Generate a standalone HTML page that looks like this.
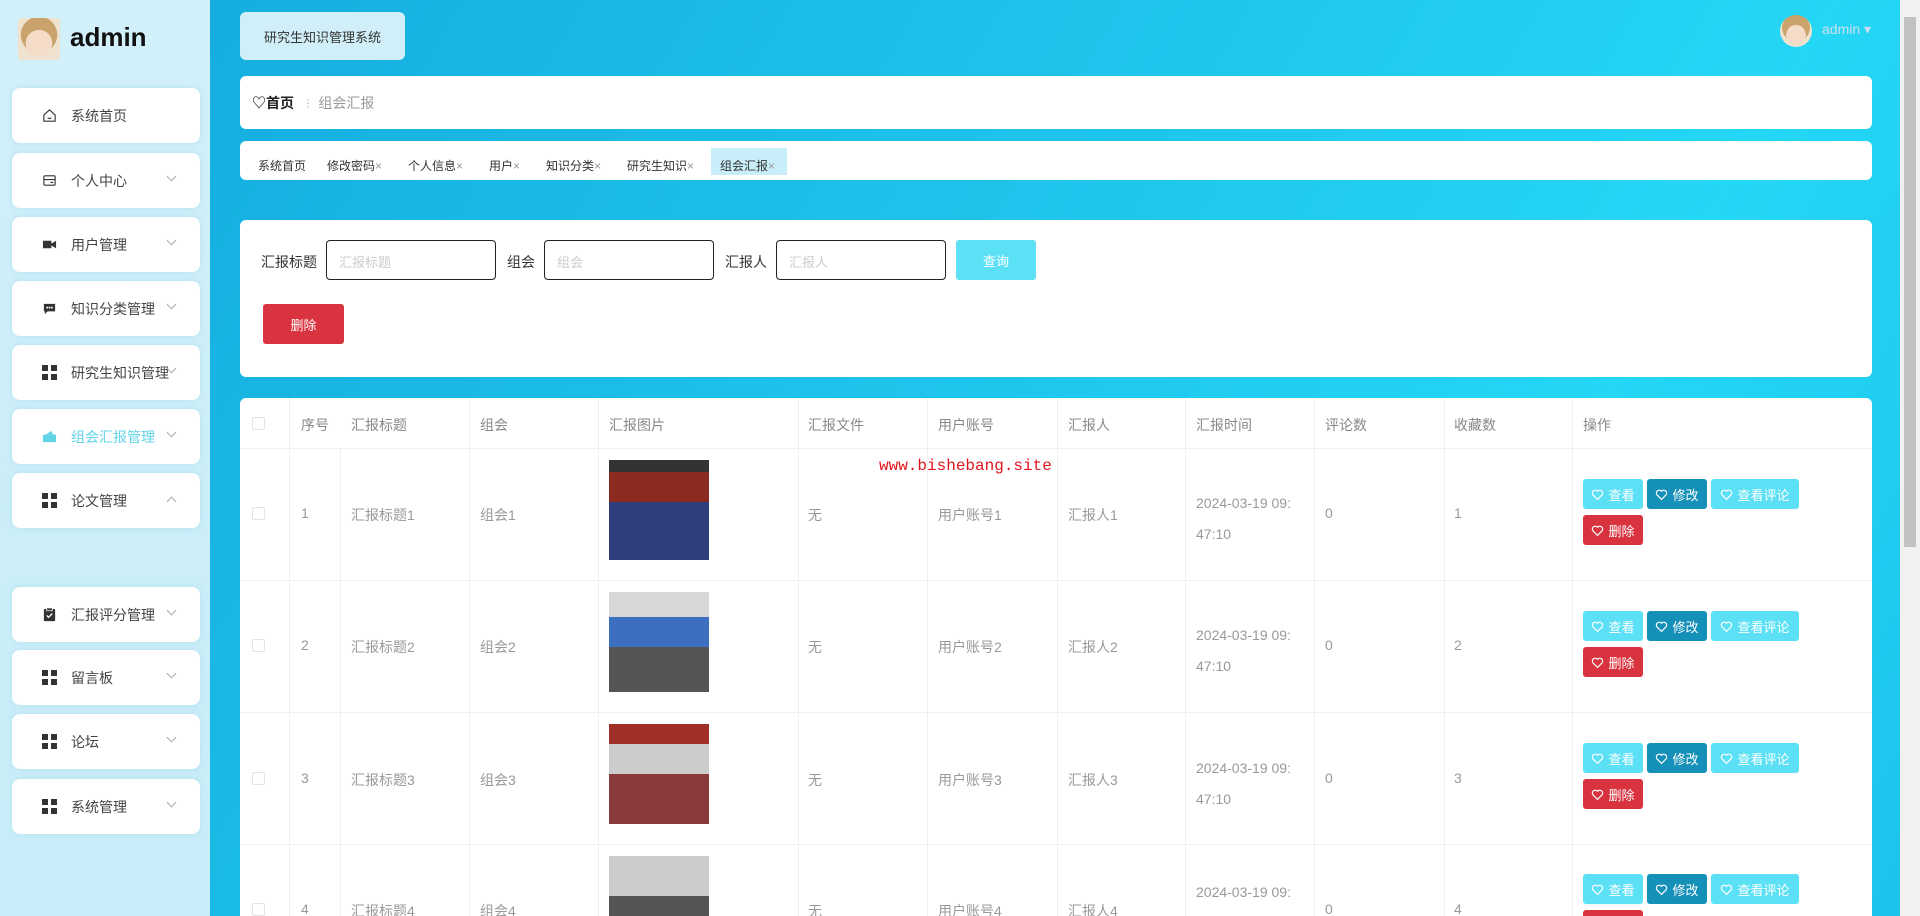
<!DOCTYPE html>
<html style="overflow:hidden;height:916px"><head><meta charset="utf-8"><style>
*{margin:0;padding:0;box-sizing:border-box}
body{width:1920px;height:916px;overflow:hidden;font-family:"Liberation Sans","Noto Sans CJK SC",sans-serif;font-size:14px;color:#333}
#wrap{position:relative;width:1920px;height:916px;overflow:hidden;background:linear-gradient(120deg,#13a9dc 0%,#1fc6ec 50%,#24d7f5 75%,#1cc3ec 100%)}
.abs{position:absolute}
.side{left:0;top:0;width:210px;height:916px;background:linear-gradient(180deg,#d2f0fa,#c8edf8)}
.mi{position:absolute;left:12px;width:188px;height:55px;background:#fff;border-radius:8px;box-shadow:0 0 6px rgba(170,220,240,.7);display:flex;align-items:center;padding-left:30px;font-size:14px;color:#444}
.mi .ic{width:15px;height:15px;margin-right:14px;display:inline-block}
.mi .ch{position:absolute;left:156px;top:20px;width:7px;height:7px;border-right:1px solid #aaa;border-bottom:1px solid #aaa;transform:rotate(45deg)}
.mi .ch.up{transform:rotate(-135deg);top:25px}
.grid{background:
linear-gradient(#333,#333) 0 0/6px 6px no-repeat,linear-gradient(#333,#333) 9px 0/6px 6px no-repeat,linear-gradient(#333,#333) 0 9px/6px 6px no-repeat,linear-gradient(#333,#333) 9px 9px/6px 6px no-repeat}
.card{background:#fff;border-radius:6px;position:absolute}
.tag{position:absolute;top:157px;font-size:12px;color:#333}
.tag i{font-style:normal;color:#999}
.lbl{position:absolute;top:252px;font-size:14px;color:#333}
.inp{position:absolute;top:240px;height:40px;width:170px;border:1px solid #222;border-radius:4px;font-size:13px;color:#ccc;padding:11px 12px}
.th{position:absolute;top:415px;color:#888;font-size:14px}
.vl{position:absolute;width:1px;background:#f0f0f0}
.hl{position:absolute;left:240px;width:1632px;height:1px;background:#f0f0f0}
.cell{position:absolute;color:#999;font-size:14px}
.btn{position:absolute;height:30px;border-radius:3px;color:#fff;font-size:13px;display:flex;align-items:center;justify-content:center;gap:4px}
.btn svg{width:13px;height:13px}
.b1{background:#5ce0f5;width:60px}.b2{background:#1590b8;width:60px}.b3{background:#5ce0f5;width:88px}.b4{background:#d9333f;width:60px}
.img{position:absolute;left:609px;width:100px;height:100px}
.cb{position:absolute;left:252px;width:13px;height:13px;border:1px solid #e3e3e3;border-radius:2px}
</style></head><body><div id="wrap">
<div class="abs side"></div>
<div class="abs" style="left:18px;top:18px;width:42px;height:42px;border-radius:4px;background:radial-gradient(circle at 50% 60%,#f4dcc8 0 40%,transparent 41%),radial-gradient(circle at 50% 40%,#c9a36b 0 55%,#efe3d0 56%)"></div>
<div class="abs" style="left:70px;top:22px;font-size:26px;font-weight:bold;color:#111">admin</div>

<div class="mi" style="top:88px"><svg class="ic" viewBox="0 0 16 16" fill="none" stroke="#333" stroke-width="1.2"><path d="M2 7.5L8 2l6 5.5V14H2z"/><path d="M6 10.5q2 1.5 4 0"/></svg>系统首页</div>
<div class="mi" style="top:153px"><svg class="ic" viewBox="0 0 16 16" fill="none" stroke="#333" stroke-width="1.2"><rect x="2" y="3" width="12" height="10" rx="1"/><path d="M2 7h12M9 10h3"/></svg>个人中心<span class="ch"></span></div>
<div class="mi" style="top:217px"><svg class="ic" viewBox="0 0 16 16"><path d="M1 4h9v8H1zM10 7l5-3v8l-5-3z" fill="#333"/></svg>用户管理<span class="ch"></span></div>
<div class="mi" style="top:281px"><svg class="ic" viewBox="0 0 16 16"><path d="M2 3h12v8H6l-3 3v-3H2z" fill="#333"/><circle cx="5.5" cy="7" r="1" fill="#fff"/><circle cx="8" cy="7" r="1" fill="#fff"/><circle cx="10.5" cy="7" r="1" fill="#fff"/></svg>知识分类管理<span class="ch"></span></div>
<div class="mi" style="top:345px"><span class="ic grid"></span>研究生知识管理<span class="ch"></span></div>
<div class="mi" style="top:409px;color:#63d3e8"><svg class="ic" viewBox="0 0 16 16"><path d="M1 6h14v8H1z" fill="#63d3e8"/><path d="M4 6l6-4 2 4" fill="#63d3e8"/></svg>组会汇报管理<span class="ch"></span></div>
<div class="mi" style="top:473px"><span class="ic grid"></span>论文管理<span class="ch up"></span></div>
<div class="mi" style="top:587px"><svg class="ic" viewBox="0 0 16 16"><rect x="2" y="2" width="12" height="13" rx="1" fill="#333"/><rect x="5" y="1" width="6" height="3" fill="#333" stroke="#fff" stroke-width=".8"/><path d="M5 9l2 2 4-4" stroke="#fff" stroke-width="1.5" fill="none"/></svg>汇报评分管理<span class="ch"></span></div>
<div class="mi" style="top:650px"><span class="ic grid"></span>留言板<span class="ch"></span></div>
<div class="mi" style="top:714px"><span class="ic grid"></span>论坛<span class="ch"></span></div>
<div class="mi" style="top:779px"><span class="ic grid"></span>系统管理<span class="ch"></span></div>

<div class="abs" style="left:240px;top:12px;width:165px;height:48px;background:#d0eff9;border-radius:6px;font-size:13px;color:#333;display:flex;align-items:center;justify-content:center">研究生知识管理系统</div>
<div class="abs" style="left:1780px;top:15px;width:32px;height:32px;border-radius:50%;background:radial-gradient(circle at 50% 62%,#f4dcc8 0 38%,transparent 39%),radial-gradient(circle at 50% 40%,#c9a36b 0 55%,#efe3d0 56%)"></div>
<div class="abs" style="left:1822px;top:21px;color:#cde;font-size:14px">admin ▾</div>

<div class="card" style="left:240px;top:76px;width:1632px;height:53px"></div>
<div class="abs" style="left:252px;top:93px;font-size:14px;font-weight:bold;color:#222">♡首页 <span style="color:#ccc;font-weight:normal;margin:0 8px">⁝</span><span style="color:#999;font-weight:normal">组会汇报</span></div>

<div class="card" style="left:240px;top:141px;width:1632px;height:39px"></div>
<div class="abs" style="left:711px;top:148px;width:76px;height:27px;background:#c8eef9"></div>
<div class="tag" style="left:258px">系统首页</div>
<div class="tag" style="left:327px">修改密码<i>×</i></div>
<div class="tag" style="left:408px">个人信息<i>×</i></div>
<div class="tag" style="left:489px">用户<i>×</i></div>
<div class="tag" style="left:546px">知识分类<i>×</i></div>
<div class="tag" style="left:627px">研究生知识<i>×</i></div>
<div class="tag" style="left:720px">组会汇报<i>×</i></div>

<div class="card" style="left:240px;top:220px;width:1632px;height:157px"></div>
<div class="lbl" style="left:261px">汇报标题</div><div class="inp" style="left:326px">汇报标题</div>
<div class="lbl" style="left:507px">组会</div><div class="inp" style="left:544px">组会</div>
<div class="lbl" style="left:725px">汇报人</div><div class="inp" style="left:776px">汇报人</div>
<div class="btn" style="left:956px;top:240px;width:80px;height:40px;background:#5ce0f5">查询</div>
<div class="btn" style="left:263px;top:304px;width:81px;height:40px;background:#d9333f">删除</div>

<div class="card" style="left:240px;top:398px;width:1632px;height:530px"></div>
<div class="hl" style="top:448px"></div><div class="hl" style="top:580px"></div><div class="hl" style="top:712px"></div><div class="hl" style="top:844px"></div>
<div class="vl" style="left:289px;top:398px;height:520px"></div>
<div class="vl" style="left:340px;top:448px;height:470px"></div>
<div class="vl" style="left:469px;top:398px;height:520px"></div>
<div class="vl" style="left:598px;top:398px;height:520px"></div>
<div class="vl" style="left:798px;top:398px;height:520px"></div>
<div class="vl" style="left:927px;top:398px;height:520px"></div>
<div class="vl" style="left:1057px;top:398px;height:520px"></div>
<div class="vl" style="left:1185px;top:398px;height:520px"></div>
<div class="vl" style="left:1314px;top:398px;height:520px"></div>
<div class="vl" style="left:1444px;top:398px;height:520px"></div>
<div class="vl" style="left:1572px;top:398px;height:520px"></div>
<div class="cb" style="top:417px"></div>
<div class="th" style="left:301px">序号</div><div class="th" style="left:351px">汇报标题</div><div class="th" style="left:480px">组会</div><div class="th" style="left:609px">汇报图片</div><div class="th" style="left:808px">汇报文件</div><div class="th" style="left:938px">用户账号</div><div class="th" style="left:1068px">汇报人</div><div class="th" style="left:1196px">汇报时间</div><div class="th" style="left:1325px">评论数</div><div class="th" style="left:1454px">收藏数</div><div class="th" style="left:1583px">操作</div>

<div class="cb" style="top:507px"></div><div class="cb" style="top:639px"></div><div class="cb" style="top:772px"></div><div class="cb" style="top:903px"></div>
<div class="img" style="top:460px;background:linear-gradient(180deg,#333 0 12%,#8a2a20 12% 42%,#2d3e7a 42% 100%)"></div>
<div class="img" style="top:592px;background:linear-gradient(180deg,#d8d8d8 0 25%,#3c6fc0 25% 55%,#555 55% 100%)"></div>
<div class="img" style="top:724px;background:linear-gradient(180deg,#a03028 0 20%,#ccc 20% 50%,#8a3a3a 50% 100%)"></div>
<div class="img" style="top:856px;background:linear-gradient(180deg,#ccc 0 40%,#555 40% 100%)"></div>

<div class="cell" style="left:301px;top:505px">1</div><div class="cell" style="left:351px;top:505px">汇报标题1</div><div class="cell" style="left:480px;top:505px">组会1</div><div class="cell" style="left:808px;top:505px">无</div><div class="cell" style="left:938px;top:505px">用户账号1</div><div class="cell" style="left:1068px;top:505px">汇报人1</div><div class="cell" style="left:1196px;top:488px;line-height:31px">2024-03-19 09:<br>47:10</div><div class="cell" style="left:1325px;top:505px">0</div><div class="cell" style="left:1454px;top:505px">1</div>
<div class="cell" style="left:301px;top:637px">2</div><div class="cell" style="left:351px;top:637px">汇报标题2</div><div class="cell" style="left:480px;top:637px">组会2</div><div class="cell" style="left:808px;top:637px">无</div><div class="cell" style="left:938px;top:637px">用户账号2</div><div class="cell" style="left:1068px;top:637px">汇报人2</div><div class="cell" style="left:1196px;top:620px;line-height:31px">2024-03-19 09:<br>47:10</div><div class="cell" style="left:1325px;top:637px">0</div><div class="cell" style="left:1454px;top:637px">2</div>
<div class="cell" style="left:301px;top:770px">3</div><div class="cell" style="left:351px;top:770px">汇报标题3</div><div class="cell" style="left:480px;top:770px">组会3</div><div class="cell" style="left:808px;top:770px">无</div><div class="cell" style="left:938px;top:770px">用户账号3</div><div class="cell" style="left:1068px;top:770px">汇报人3</div><div class="cell" style="left:1196px;top:753px;line-height:31px">2024-03-19 09:<br>47:10</div><div class="cell" style="left:1325px;top:770px">0</div><div class="cell" style="left:1454px;top:770px">3</div>
<div class="cell" style="left:301px;top:901px">4</div><div class="cell" style="left:351px;top:901px">汇报标题4</div><div class="cell" style="left:480px;top:901px">组会4</div><div class="cell" style="left:808px;top:901px">无</div><div class="cell" style="left:938px;top:901px">用户账号4</div><div class="cell" style="left:1068px;top:901px">汇报人4</div><div class="cell" style="left:1196px;top:884px">2024-03-19 09:</div><div class="cell" style="left:1325px;top:901px">0</div><div class="cell" style="left:1454px;top:901px">4</div>

<svg width="0" height="0" style="position:absolute"><defs><symbol id="h" viewBox="0 0 16 16"><path d="M8 14L2.5 8.5A3.2 3.2 0 018 4a3.2 3.2 0 015.5 4.5z" fill="none" stroke="#fff" stroke-width="1.5"/></symbol></defs></svg>
<div class="btn b1" style="left:1583px;top:479px"><svg><use href="#h"/></svg>查看</div><div class="btn b2" style="left:1647px;top:479px"><svg><use href="#h"/></svg>修改</div><div class="btn b3" style="left:1711px;top:479px"><svg><use href="#h"/></svg>查看评论</div><div class="btn b4" style="left:1583px;top:515px"><svg><use href="#h"/></svg>删除</div>
<div class="btn b1" style="left:1583px;top:611px"><svg><use href="#h"/></svg>查看</div><div class="btn b2" style="left:1647px;top:611px"><svg><use href="#h"/></svg>修改</div><div class="btn b3" style="left:1711px;top:611px"><svg><use href="#h"/></svg>查看评论</div><div class="btn b4" style="left:1583px;top:647px"><svg><use href="#h"/></svg>删除</div>
<div class="btn b1" style="left:1583px;top:743px"><svg><use href="#h"/></svg>查看</div><div class="btn b2" style="left:1647px;top:743px"><svg><use href="#h"/></svg>修改</div><div class="btn b3" style="left:1711px;top:743px"><svg><use href="#h"/></svg>查看评论</div><div class="btn b4" style="left:1583px;top:779px"><svg><use href="#h"/></svg>删除</div>
<div class="btn b1" style="left:1583px;top:874px"><svg><use href="#h"/></svg>查看</div><div class="btn b2" style="left:1647px;top:874px"><svg><use href="#h"/></svg>修改</div><div class="btn b3" style="left:1711px;top:874px"><svg><use href="#h"/></svg>查看评论</div><div class="btn b4" style="left:1583px;top:910px"></div>

<div class="abs" style="left:879px;top:457px;font-family:'Liberation Mono',monospace;font-size:16px;color:#e0141e">www.bishebang.site</div>

<div class="abs" style="left:1900px;top:0;width:20px;height:916px;background:#f1f1f1"></div>
<div class="abs" style="left:1904px;top:17px;width:12px;height:530px;background:#c1c1c1"></div>
</div></body></html>
